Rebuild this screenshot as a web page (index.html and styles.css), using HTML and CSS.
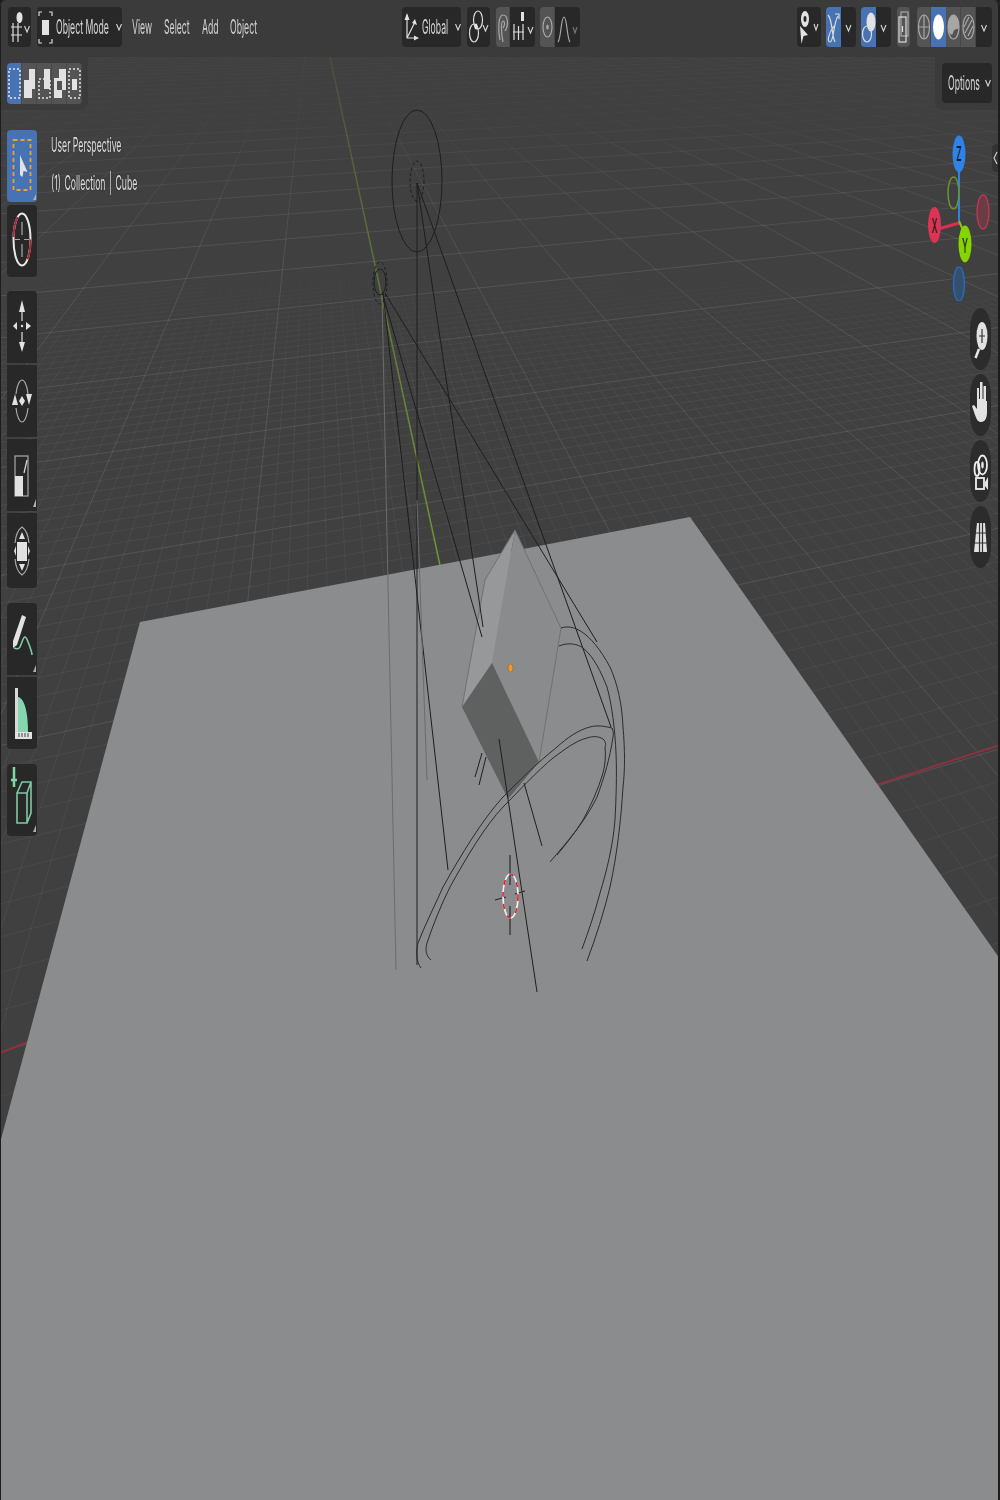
FILE: index.html
```html
<!DOCTYPE html>
<html lang="en">
<head>
<meta charset="utf-8">
<title>Blender 3D Viewport</title>
<link rel="stylesheet" href="styles.css">
</head>
<body>
<main class="viewport">
  <svg class="scene" viewBox="0 0 1000 1500" aria-hidden="true">
    <defs>
      <linearGradient id="yfade" gradientUnits="userSpaceOnUse" x1="330" y1="57" x2="440" y2="565">
        <stop offset="0" stop-color="#4a5040"/>
        <stop offset=".45" stop-color="#5f7a30"/>
        <stop offset="1" stop-color="#729c28"/>
      </linearGradient>
    </defs>
    <g id="grid"></g>
    <path class="axis-y" d="M330 57 440 565"/>
    <path class="axis-x" d="M0 1053 28 1042M876 785 1000 745"/>
    <polygon class="plane" points="140,622 690,517 1000,959 1000,1500 0,1500 0,1143"/>
    <polygon class="face-top" points="515,530 485,580 462,707 492,663"/>
    <polygon class="face-main" points="515,530 561,628 539,762 492,663"/>
    <polygon class="face-dark" points="462,707 492,663 539,762 508,799"/>
    <path class="edge" d="M515 530 485 580 462 707M515 530 561 628 539 762"/>
    <ellipse class="origin" cx="510.500" cy="668" rx="2.500" ry="4"/>

    <ellipse class="wire" cx="417" cy="181" rx="25" ry="71"/>
    <ellipse class="wire dash" cx="417" cy="181" rx="7" ry="20"/>
    <ellipse class="wire" cx="380" cy="282" rx="6" ry="13"/>
    <ellipse class="wire dash" cx="380" cy="283" rx="7" ry="21"/>
    <path class="wire" d="M417 183V965M417 183 483 627M417 183 611 727"/>
    <path class="wire" d="M382 292 482 637M383 293 448 870M385 293 597 642"/>
    <path class="wire-faint" d="M382 295 396 970M417 500 427 780"/>
    <path class="wire" d="M499 739 537 992M524 783 542 846M482 753 475 777M486 757 479 785"/>
    <path class="wire ring" d="M561 628C572 624 590 630 610 667C618 685 622 705 623 727C625 750 625 770 623 787C621 820 617 855 610 887C604 912 596 937 587 961"/>
    <path class="wire ring" d="M559 646C568 642 578 644 583 648C594 657 601 672 607 687C612 705 615 730 616 753C617 775 616 800 615 820C613 845 607 870 600 893C595 912 589 930 582 949"/>
    <path class="wire ring" d="M612 728C604 726 597 725 590 727C578 730 567 738 557 747C538 762 520 780 503 797C482 820 461 855 443 887C435 905 425 925 418 943C416 950 416 962 421 968"/>
    <path class="wire ring" d="M603 739C598 736 593 736 587 738C575 741 564 750 553 758C536 772 520 790 503 807C485 826 466 858 450 887C441 905 433 925 427 943C425 950 426 956 431 960"/>
    <path class="wire ring" d="M603 739C606 742 606 745 605 747C606 757 605 765 603 773C598 790 591 805 583 820C575 833 566 844 557 855"/>
    <path class="wire ring" d="M612 728C613 731 614 734 613 737C610 758 604 778 597 797C585 822 567 842 550 862"/>

    <path class="cursor-cross" d="M510 855V885M510 906V935M495 900 506 897M515 894 525 891"/>
    <ellipse class="cursor-white" cx="510.500" cy="896" rx="7.500" ry="22"/>
    <ellipse class="cursor-red" cx="510.500" cy="896" rx="7.500" ry="22"/>
  </svg>

  <header class="header">
    <div class="btn btn-editor">
      <svg class="ico" width="23" height="40" viewBox="0 0 23 40"><ellipse class="f" cx="11.500" cy="10.500" rx="3" ry="5.500"/><path class="s" d="M3 20H14M3 28H14M5 16V35M10 16V35"/><path class="chev" d="M16.500 19 19 25 21.500 19"/></svg>
    </div>
    <div class="btn btn-mode">
      <svg class="ico ico-mode" width="15" height="40" viewBox="0 0 15 40"><path class="s" d="M1 9V5H4M11 5H14V9M14 32V36H11M4 36H1V32"/><rect class="f" x="4" y="13" width="7" height="15"/></svg>
      <span class="sq w-mode"><span>Object Mode</span></span>
      <svg class="chev-svg" width="8" height="8" viewBox="0 0 8 8"><path class="chev" d="M1.500 1 4 7 6.500 1"/></svg>
    </div>
    <nav class="menu">
      <span class="sq w-view"><span>View</span></span>
      <span class="sq w-select"><span>Select</span></span>
      <span class="sq w-add"><span>Add</span></span>
      <span class="sq w-object"><span>Object</span></span>
    </nav>

    <div class="btn btn-global">
      <svg class="ico" width="15" height="40" viewBox="0 0 15 40"><path class="s" d="M3 8V31H13M3 31 11 15"/><path class="f" d="M3 6 5.500 13H.5ZM11 12 13 18 8 16ZM15 31 10 28.500V33.500Z"/></svg>
      <span class="sq w-global"><span>Global</span></span>
      <svg class="chev-svg" width="8" height="8" viewBox="0 0 8 8"><path class="chev" d="M1.500 1 4 7 6.500 1"/></svg>
    </div>
    <div class="btn btn-pivot">
      <svg class="ico" width="23" height="40" viewBox="0 0 23 40"><ellipse class="s" cx="11" cy="13" rx="4.500" ry="9"/><ellipse class="s" cx="7" cy="26" rx="4.500" ry="9"/><ellipse class="f" cx="9" cy="19.500" rx="1.500" ry="3"/><path class="chev" d="M16 18 18.500 24 21 18"/></svg>
    </div>
    <div class="split split-snap">
      <div class="seg seg-grey w14">
        <svg class="ico" width="14" height="40" viewBox="0 0 14 40"><path class="s-dim" d="M4 33C2 24 2 8 7 8C12 8 13 18 9 24M7 35C5 26 5 14 7 14C9 14 9 19 7 21"/></svg>
      </div>
      <div class="seg seg-dark w25">
        <svg class="ico" width="25" height="40" viewBox="0 0 25 40"><rect class="f" x="11" y="5" width="3" height="9"/><path class="s" d="M3 25H14M4 17V33M8.500 19V33M13 17V33"/><path class="chev" d="M18 20 20.500 26 23 20"/></svg>
      </div>
    </div>
    <div class="split split-prop">
      <div class="seg seg-grey w15">
        <svg class="ico" width="15" height="40" viewBox="0 0 15 40"><ellipse class="s-dim" cx="7.500" cy="20" rx="4.500" ry="10"/><ellipse class="f-dim" cx="7.500" cy="20" rx="1.300" ry="2.500"/></svg>
      </div>
      <div class="seg seg-dark w25 rmr">
        <svg class="ico" width="25" height="40" viewBox="0 0 25 40"><path class="s-dim" d="M3 35C6 32 6 10 9 10C12 10 12 32 15 35"/><path class="chev chev-dim" d="M18 20 20 26 22 20"/></svg>
      </div>
    </div>

    <span class="spacer"></span>

    <div class="btn btn-vis">
      <svg class="ico" width="24" height="40" viewBox="0 0 24 40"><ellipse class="f" cx="8" cy="12" rx="4" ry="8"/><ellipse class="hole" cx="8" cy="12" rx="1.500" ry="3"/><path class="f" d="M3 19 11 28 6.500 29 4.500 37Z"/><path class="chev" d="M17 17 19 23 21 17"/></svg>
    </div>
    <div class="split split-ov">
      <div class="seg seg-blue w15">
        <svg class="ico" width="15" height="40" viewBox="0 0 15 40"><path class="s" d="M2 8C7 14 5 26 9 35M12 9C7 17 8 35 4 35C1 35 2 27 8 19"/><path class="s" d="M9 7H13V12"/></svg>
      </div>
      <div class="seg seg-dark w15"><svg class="ico" width="15" height="40" viewBox="0 0 15 40"><path class="chev" d="M5 18 7.500 24 10 18"/></svg></div>
    </div>
    <div class="split split-ov">
      <div class="seg seg-blue w15">
        <svg class="ico" width="15" height="40" viewBox="0 0 15 40"><ellipse class="f" cx="10" cy="15" rx="4.500" ry="9.500"/><ellipse class="s" cx="6" cy="27" rx="4.500" ry="8"/></svg>
      </div>
      <div class="seg seg-dark w15"><svg class="ico" width="15" height="40" viewBox="0 0 15 40"><path class="chev" d="M5 18 7.500 24 10 18"/></svg></div>
    </div>
    <div class="xray">
      <svg class="ico" width="13" height="40" viewBox="0 0 13 40"><rect class="s-dim" x="4" y="5" width="7" height="24"/><rect class="s" x="2" y="10" width="7" height="25"/><path class="s" d="M5.500 19V25"/></svg>
    </div>
    <div class="split split-shade">
      <div class="seg seg-grey w14">
        <svg class="ico" width="14" height="40" viewBox="0 0 14 40"><ellipse class="s-dim" cx="7" cy="20" rx="5.500" ry="12"/><path class="s-dim" d="M7 8V32M1.500 20H12.500"/></svg>
      </div>
      <div class="seg seg-blue w15">
        <svg class="ico" width="15" height="40" viewBox="0 0 15 40"><ellipse class="f-white" cx="7.500" cy="20" rx="5.500" ry="12.500"/></svg>
      </div>
      <div class="seg seg-grey w15">
        <svg class="ico" width="15" height="40" viewBox="0 0 15 40"><ellipse class="s-dim" cx="7.500" cy="20" rx="5.500" ry="12"/><path class="f-dim" d="M2 20C2 12 5 8 7.500 8C10 8 13 12 13 20C13 24 8 20 7 26C6 30 2 26 2 20Z"/></svg>
      </div>
      <div class="seg seg-grey w15">
        <svg class="ico" width="15" height="40" viewBox="0 0 15 40"><ellipse class="s-dim" cx="7.500" cy="20" rx="5.500" ry="12"/><path class="s-dim" d="M4 26 11 13M7 29 12 19M3 20 8 10"/></svg>
      </div>
      <div class="seg seg-dark w16"><svg class="ico" width="16" height="40" viewBox="0 0 16 40"><path class="chev" d="M5.500 18 8 24 10.500 18"/></svg></div>
    </div>
  </header>

  <section class="panel panel-left">
    <div class="pad">
      <div class="pad-btn pad-on"><svg class="ico" width="15" height="41" viewBox="0 0 15 41"><rect class="dots" x="2" y="6" width="11" height="29"/></svg></div>
      <div class="pad-btn"><svg class="ico" width="15" height="41" viewBox="0 0 15 41"><path class="f" d="M2 35V17H7V6H13V26H10V35Z"/></svg></div>
      <div class="pad-btn"><svg class="ico" width="15" height="41" viewBox="0 0 15 41"><path class="f" d="M7 6H13V26H7Z"/><rect class="dots" x="2" y="16" width="11" height="19"/></svg></div>
      <div class="pad-btn"><svg class="ico" width="15" height="41" viewBox="0 0 15 41"><path class="f" fill-rule="evenodd" d="M7 6H14V27H10V35H2V15H7ZM5 18V27H10V18Z"/></svg></div>
      <div class="pad-btn"><svg class="ico" width="15" height="41" viewBox="0 0 15 41"><rect class="dots" x="2" y="6" width="11" height="29"/><rect class="f" x="5" y="16" width="5" height="11"/></svg></div>
    </div>
  </section>

  <section class="panel panel-right">
    <div class="btn btn-options">
      <span class="sq w-options"><span>Options</span></span>
      <svg class="chev-svg" width="8" height="8" viewBox="0 0 8 8"><path class="chev" d="M1.500 1 4 7 6.500 1"/></svg>
    </div>
  </section>

  <aside class="toolbar">
    <div class="tool-group">
      <div class="tool tool-on">
        <svg class="ico" width="30" height="72" viewBox="0 0 30 72"><rect class="dots-orange" x="6.500" y="10" width="17" height="50"/><path class="f" d="M13 25 20.500 42 16.500 41 15.500 47 13 45Z"/><path class="corner" d="M29 70V64L26 70Z"/></svg>
      </div>
    </div>
    <div class="tool-group gap-first">
      <div class="tool">
        <svg class="ico" width="30" height="72" viewBox="0 0 30 72"><ellipse class="cur-w" cx="15" cy="34.500" rx="8.500" ry="26"/><ellipse class="cur-r" cx="15" cy="34.500" rx="8.500" ry="26"/><path class="s-dim" d="M15 17V30M15 39V52M8 34.500H13M17 34.500H22"/></svg>
      </div>
    </div>
    <div class="tool-group gap-after stack">
      <div class="tool">
        <svg class="ico" width="30" height="72" viewBox="0 0 30 72"><path class="f" d="M15 9 18 21H12ZM15 61 18 51H12ZM6 35 10 31V39ZM24 35 19 31V39Z"/><path class="s" d="M15 21V30M15 41V51"/><circle class="f" cx="15" cy="35" r="1.200"/></svg>
      </div>
      <div class="tool">
        <svg class="ico" width="30" height="72" viewBox="0 0 30 72"><path class="s-dim" d="M9 29C10 19 13 15 15 15C17 15 20 19 21 29M21 43C20 53 17 57 15 57C13 57 10 53 9 43"/><path class="f" d="M8 29 11 40H5ZM22 40 25 29H19ZM15 31 18 36 15 41 12 36Z"/></svg>
      </div>
      <div class="tool">
        <svg class="ico" width="30" height="72" viewBox="0 0 30 72"><rect class="s-dim" x="8" y="17" width="13" height="40"/><rect class="f" x="8" y="37" width="8" height="20"/><path class="s" d="M20 21 17 34"/><path class="corner" d="M29 68V60L26 68Z"/></svg>
      </div>
      <div class="tool tool-tall">
        <svg class="ico" width="30" height="75" viewBox="0 0 30 75"><path class="s-dim" d="M8 30C9 20 12 16 15 14C18 16 21 20 22 30M8 46C9 56 12 60 15 62C18 60 21 56 22 46"/><rect class="f" x="10" y="29" width="10" height="19"/><path class="f" d="M15 19 18 26H12ZM15 58 18 51H12ZM7 38 9 33V43ZM23 38 21 33V43Z"/></svg>
      </div>
    </div>
    <div class="tool-group gap-after stack">
      <div class="tool">
        <svg class="ico" width="30" height="72" viewBox="0 0 30 72"><path class="f" d="M15 12 19 14 10 42 6 45 6 38Z"/><path class="green" d="M7 45C9 46 12 46 13 44C15 40 16 34 18 34C20 34 21 40 23 44C24 47 25 50 25 52"/><path class="corner" d="M29 69V62L26 69Z"/></svg>
      </div>
      <div class="tool">
        <svg class="ico" width="30" height="72" viewBox="0 0 30 72"><path class="f-green" d="M11 20C17 21 21 34 21 55H11Z"/><path class="s-thick" d="M9.500 11V58"/><path class="f" d="M8 55H25V62H8Z"/><path class="ticks" d="M12 56V60M15 56V60M18 56V60M21 56V60"/></svg>
      </div>
    </div>
    <div class="tool-group stack">
      <div class="tool">
        <svg class="ico" width="30" height="72" viewBox="0 0 30 72"><path class="add" d="M7 3V23M4 16H10"/><path class="green" d="M10 29H20V59H10ZM10 29 15 18H24V49L20 59M24 18 20 29"/><path class="corner" d="M29 68V61L26 68Z"/></svg>
      </div>
    </div>
  </aside>

  <div class="overlay-text">
    <p class="ot-line"><span class="sq w-persp"><span>User Perspective</span></span></p>
    <p class="ot-line line-coll"><span class="sq w-coll"><span>(1) Collection | Cube</span></span></p>
  </div>

  <svg class="gizmo" width="72" height="170" viewBox="0 0 72 170">
    <path class="g-blue-l" d="M31 24V90"/>
    <path class="g-red-l" d="M10 98 31 92"/>
    <path class="g-green-l" d="M31 90 37 104"/>
    <ellipse class="g-red-ghost" cx="55" cy="81" rx="6" ry="17"/>
    <ellipse class="g-green-ghost" cx="25.500" cy="62" rx="5.500" ry="16"/>
    <ellipse class="g-blue-ghost" cx="31" cy="153" rx="5.500" ry="17"/>
    <ellipse class="g-z" cx="31" cy="23" rx="6.500" ry="18.500"/>
    <ellipse class="g-x" cx="6.500" cy="94" rx="6.500" ry="18"/>
    <ellipse class="g-y" cx="37" cy="113" rx="6.500" ry="18.500"/>
    <text class="g-txt tz" x="0" y="0">Z</text>
    <text class="g-txt tx" x="0" y="0">X</text>
    <text class="g-txt ty" x="0" y="0">Y</text>
  </svg>

  <div class="tab-n"><svg class="ico" width="8" height="28" viewBox="0 0 8 28"><path class="chev" d="M5 8 2 14 5 20"/></svg></div>

  <div class="nav-pills">
    <div class="pill">
      <svg class="ico" width="21" height="62" viewBox="0 0 21 62"><ellipse class="f" cx="12" cy="28" rx="5.500" ry="14"/><path class="pl" d="M12 21V35M9 28H15"/><path class="handle" d="M9 41 5.500 50"/></svg>
    </div>
    <div class="pill">
      <svg class="ico" width="21" height="62" viewBox="0 0 21 62"><path class="f" d="M7 14H9V25H10V8H12.500V25H13.500V12H16V27H17V38C17 44 15 48 11 48C8 48 7 46 5 41L2 32 4 31 7 35Z"/></svg>
    </div>
    <div class="pill">
      <svg class="ico" width="21" height="62" viewBox="0 0 21 62"><ellipse class="s-w" cx="12.500" cy="25" rx="4.500" ry="9.500"/><ellipse class="s-w" cx="7" cy="29" rx="2.500" ry="7"/><ellipse class="f" cx="12.500" cy="25" rx="1.300" ry="3.500"/><rect class="s-w" x="6" y="38" width="8" height="11"/><path class="f" d="M15 42 18 37V50L15 46Z"/></svg>
    </div>
    <div class="pill">
      <svg class="ico" width="21" height="62" viewBox="0 0 21 62"><path class="f" d="M7 17H15L17 46H4Z"/><path class="pl" d="M9.500 17V46M12.500 17V46M4 27H17M4 37H17"/></svg>
    </div>
  </div>
</main>
<script src="grid.js"></script>
</body>
</html>
```
FILE: styles.css
```css
* { box-sizing: border-box; }
html, body { margin: 0; padding: 0; background: #1d1d1d; }
body { width: 1000px; height: 1500px; overflow: hidden; font-family: "Inter", "Liberation Sans", sans-serif; }

.viewport { position: relative; width: 1000px; height: 1500px; overflow: hidden; background: #404040; color: #d6d6d6; border-radius: 6px 6px 0 0; }
.viewport::after { content: ""; position: absolute; inset: 0; border-style: solid; border-color: #1d1d1d; border-width: 0 2px 0 1px; border-radius: 6px 6px 0 0; pointer-events: none; }
.scene { position: absolute; inset: 0; width: 1000px; height: 1500px; filter: blur(.45px); }

/* scene */
.axis-y { stroke: url(#yfade); stroke-width: 1.300; fill: none; }
.axis-x { stroke: #8f3040; stroke-width: 2; fill: none; }
.plane { fill: #8b8c8e; }
.face-top { fill: #97989a; }
.face-main { fill: #8a8b8d; }
.face-dark { fill: #5f6160; }
.edge { stroke: #707172; stroke-width: 1; fill: none; }
.origin { fill: #f39a1f; stroke: #7a6a50; stroke-width: .6; }
.wire { stroke: #1e1e1e; stroke-width: 1; fill: none; }
.wire.ring { stroke: #2c2c2c; stroke-width: 1; }
.wire.dash { stroke-dasharray: 3 2.500; }
.wire-faint { stroke: #6b6c6d; stroke-width: 1; fill: none; }
.cursor-cross { stroke: #2a2a2a; stroke-width: 1.200; fill: none; }
.cursor-white { fill: none; stroke: #f0f0f0; stroke-width: 1.600; }
.cursor-red { fill: none; stroke: #e0202a; stroke-width: 1.600; stroke-dasharray: 5 7; }

/* text squeezed horizontally, as in the reference */
.sq { display: block; white-space: nowrap; font-size: 20px; line-height: 24px; filter: blur(.3px); }
.sq > span { display: inline-block; transform: scaleX(.435); transform-origin: 0 50%; }
.w-mode { width: 54px; }
.w-view { width: 20px; }
.w-select { width: 26px; }
.w-add { width: 16px; }
.w-object { width: 28px; }
.w-global { width: 28px; }
.w-options { width: 33px; }
.w-persp { width: 71px; }
.w-coll { width: 87px; }

/* header */
.header { position: relative; display: flex; align-items: flex-start; height: 57px; padding: 7px 8px 0; background: #3b3b3b; }
.btn { display: flex; align-items: center; height: 40px; background: #282828; border-radius: 4px; flex: none; }
.btn-editor { width: 23px; }
.btn-mode { width: 85px; margin-left: 6px; padding-left: 1px; }
.btn-mode .sq { margin-left: 3px; }
.chev-svg { flex: none; margin-left: 5px; }
.menu { display: flex; align-items: center; height: 40px; margin-left: 10px; flex: none; color: #d0d0d0; }
.menu .sq + .sq { margin-left: 12px; }
.btn-global { width: 59px; margin-left: 144px; padding-left: 2px; }
.btn-global .sq { margin-left: 3px; }
.btn-global .chev-svg { margin-left: 4px; }
.btn-pivot { width: 23px; margin-left: 6px; }
.split { display: flex; height: 40px; border-radius: 4px; overflow: hidden; flex: none; }
.split-snap { margin-left: 6px; }
.split-prop { margin-left: 5px; }
.seg { height: 40px; flex: none; }
.seg-grey { background: #545454; box-shadow: inset -1px 0 0 #474747; }
.seg-dark { background: #282828; }
.seg-blue { background: #4772b3; }
.w14 { width: 14px; }
.w15 { width: 15px; }
.w16 { width: 16px; }
.w25 { width: 25px; }
.spacer { flex: 1; }
.btn-vis { width: 24px; }
.split-ov { width: 30px; margin-left: 5px; }
.xray { width: 13px; height: 40px; margin-left: 6px; background: #545454; border-radius: 4px; flex: none; }
.split-shade { margin-left: 7px; }

.ico { display: block; flex: none; }
.f { fill: #e2e2e2; }
.f-white { fill: #fff; }
.f-dim { fill: #a6a6a6; }
.s { fill: none; stroke: #dcdcdc; stroke-width: 1.200; }
.s-w { fill: none; stroke: #eee; stroke-width: 1.800; }
.s-dim { fill: none; stroke: #a8a8a8; stroke-width: 1.200; }
.s-thick { fill: none; stroke: #d8d8d8; stroke-width: 3; }
.hole { fill: #282828; }
.chev { fill: none; stroke: #d6d6d6; stroke-width: 1.100; }
.chev-dim { stroke: #777; }
.corner { fill: #b0b0b0; }
.dots { fill: none; stroke: #e6e6e6; stroke-width: 1.500; stroke-dasharray: 2 2; }
.dots-orange { fill: none; stroke: #eaa32c; stroke-width: 1.800; stroke-dasharray: 4 3; }
.cur-w { fill: none; stroke: #e8e8e8; stroke-width: 2; }
.cur-r { fill: none; stroke: #a32a38; stroke-width: 2; stroke-dasharray: 20 40; }
.green { fill: none; stroke: #7fc9a0; stroke-width: 1.600; }
.f-green { fill: #85d6ae; }
.add { fill: none; stroke: #7fd8a6; stroke-width: 2.500; }
.ticks { fill: none; stroke: #444; stroke-width: 1; }
.pl { fill: none; stroke: #333; stroke-width: 1.200; }
.handle { fill: none; stroke: #e8e8e8; stroke-width: 2.500; }

/* second row panels */
.panel { position: absolute; top: 57px; height: 53px; background: #3b3b3b; }
.panel-left { left: 0; width: 88px; padding: 6px 0 0 7px; border-radius: 0 0 8px 0; }
.panel-right { right: 0; width: 65px; padding: 6px 0 0 7px; border-radius: 0 0 0 8px; }
.pad { display: flex; width: 75px; height: 41px; border-radius: 4px; overflow: hidden; }
.pad-btn { width: 15px; height: 41px; background: #545454; box-shadow: inset -1px 0 0 #484848; }
.pad-on { background: #4772b3; }
.btn-options { width: 50px; padding-left: 6px; }
.btn-options .chev-svg { margin-left: 3px; }

/* tool shelf */
.toolbar { position: absolute; left: 7px; top: 130px; width: 30px; display: flex; flex-direction: column; }
.tool-group { border-radius: 4px; overflow: hidden; flex: none; margin-bottom: 3px; }
.gap-first { margin-bottom: 14px; }
.gap-after { margin-bottom: 15px; }
.stack { display: flex; flex-direction: column; gap: 2px; }
.tool { height: 72px; background: #282828; }
.tool-tall { height: 75px; }
.tool-on { background: #4772b3; }

/* text overlay */
.overlay-text { position: absolute; left: 51px; top: 133px; }
.ot-line { margin: 0 0 14px; color: #dedede; text-shadow: 0 0 2px #222; }
.line-coll { word-spacing: 2.400px; }

/* gizmo */
.gizmo { position: absolute; left: 928px; top: 131px; }
.g-blue-l { stroke: #2f83e8; stroke-width: 2; fill: none; }
.g-red-l { stroke: #d8304f; stroke-width: 3; fill: none; }
.g-green-l { stroke: #86c313; stroke-width: 2; fill: none; }
.g-z { fill: #2f83e8; }
.g-x { fill: #dc3454; }
.g-y { fill: #86d400; }
.g-red-ghost { fill: #6b3c46; stroke: #b43a50; stroke-width: 1.500; }
.g-green-ghost { fill: none; stroke: #6b9330; stroke-width: 1.500; }
.g-blue-ghost { fill: #33506f; stroke: #2a69b4; stroke-width: 1.500; }
.g-txt { font-family: "Inter", "Liberation Sans", sans-serif; font-size: 20px; font-weight: 500; fill: #1c1c1c; text-anchor: middle; }
.tz { transform: translate(31px, 30px) scaleX(.42); }
.tx { transform: translate(6.500px, 102px) scaleX(.42); }
.ty { transform: translate(37px, 122px) scaleX(.42); }

.tab-n { position: absolute; right: 0; top: 144px; width: 8px; height: 28px; background: #333; border-radius: 4px 0 0 4px; }

/* navigation pills */
.nav-pills { position: absolute; left: 970px; top: 308px; display: flex; flex-direction: column; gap: 4px; }
.pill { width: 21px; height: 62px; background: #2c2c2c; border-radius: 11px / 22px; }
```
FILE: grid.js
```js
// Perspective floor grid for the 3D viewport.
(function () {
  var a = 0.1358, b = 0.568;
  var VX = [3584, -35], VY = [313, -20], O = [511, 897];
  var MAJOR = 0.663, SUB = 10;
  var bins = {};

  function clamp(x) { return Math.max(0, Math.min(1, x)); }

  function project(u, v) {
    var w = 1 + a * u + b * v;
    if (w < 0.04) return null;
    return [
      (u * a * VX[0] + v * b * VY[0] + O[0]) / w,
      (u * a * VX[1] + v * b * VY[1] + O[1]) / w,
      w
    ];
  }

  function alphaFor(major, w) {
    if (major) return 0.02 + 0.08 * clamp((6.5 - w) / 3.5);
    return 0.05 * clamp((3.3 - w) / 1.1);
  }

  function addSegment(p, q, major) {
    if (!p || !q) return;
    if (Math.max(p[0], q[0]) < 0 || Math.min(p[0], q[0]) > 1000) return;
    if (Math.max(p[1], q[1]) < 50 || Math.min(p[1], q[1]) > 1500) return;
    var key = Math.round(alphaFor(major, (p[2] + q[2]) / 2) * 100);
    if (key < 1) return;
    bins[key] = (bins[key] || "") + "M" + p[0].toFixed(1) + " " + p[1].toFixed(1) + "L" + q[0].toFixed(1) + " " + q[1].toFixed(1);
  }

  var step = MAJOR / SUB;
  for (var i = -200; i <= 400; i++) {
    var c = i * step, major = i % SUB === 0, prev, cur, k;
    prev = null;
    for (k = 0; k <= 48; k++) {
      cur = project(c, -1.6 + 28 * Math.pow(k / 48, 2));
      if (prev) addSegment(prev, cur, major);
      prev = cur;
    }
    if (c > -3) {
      prev = null;
      for (k = 0; k <= 48; k++) {
        cur = project(-14 + 44 * k / 48, c);
        if (prev) addSegment(prev, cur, major);
        prev = cur;
      }
    }
  }

  var g = document.getElementById("grid");
  Object.keys(bins).forEach(function (k) {
    var p = document.createElementNS("http://www.w3.org/2000/svg", "path");
    p.setAttribute("d", bins[k]);
    p.setAttribute("fill", "none");
    p.setAttribute("stroke", "rgba(255,255,255," + k / 100 + ")");
    p.setAttribute("stroke-width", "1");
    g.appendChild(p);
  });
})();
```
